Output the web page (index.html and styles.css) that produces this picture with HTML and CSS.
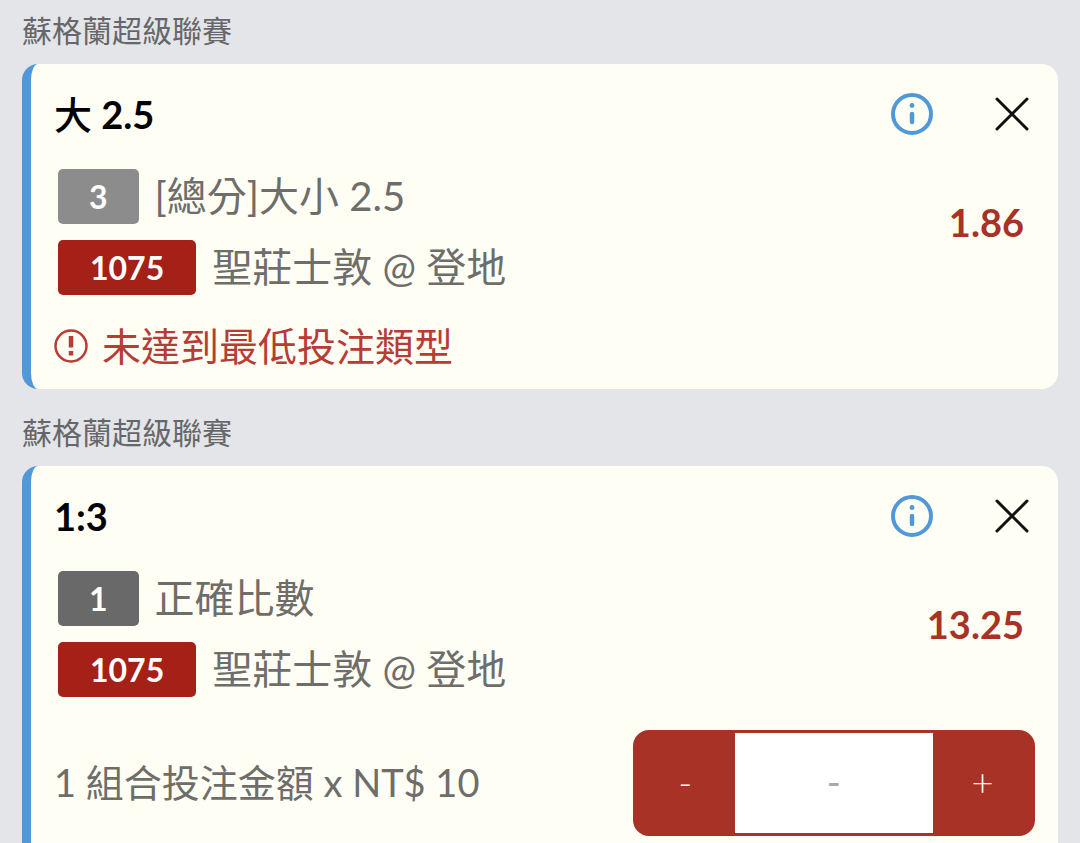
FILE: index.html
```html
<!DOCTYPE html>
<html lang="zh-Hant">
<head>
    <meta charset="UTF-8">
    <meta name="viewport" content="width=device-width, initial-scale=1.0">
    <title>投注單</title>
    <link rel="stylesheet" href="styles.css">
</head>
<body>
    <main class="slip">
        <h2 class="league">蘇格蘭超級聯賽</h2>
        <section class="bet">
            <div class="bet-header">
                <h3><span class="pick">大</span> 2.5</h3>
                <button class="icon-btn info" type="button" aria-label="資訊">
                    <svg width="42" height="42" viewBox="0 0 42 42" fill="none" stroke="currentColor" stroke-linecap="round">
                        <circle cx="21" cy="21" r="19" stroke-width="4"/>
                        <path d="M21 21v8" stroke-width="4.500"/>
                        <circle cx="21" cy="12.500" r="2.400" fill="currentColor" stroke="none"/>
                    </svg>
                </button>
                <button class="icon-btn close" type="button" aria-label="移除">
                    <svg width="34" height="34" viewBox="0 0 34 34" fill="none" stroke="currentColor" stroke-width="3" stroke-linecap="round">
                        <path d="M2 2l30 30M32 2L2 32"/>
                    </svg>
                </button>
            </div>
            <div class="bet-body">
                <div class="lines">
                    <p class="line"><span class="badge light">3</span>[總分]大小 2.5</p>
                    <p class="line"><span class="badge red">1075</span>聖莊士敦 @ 登地</p>
                </div>
                <strong class="odds">1.86</strong>
            </div>
            <p class="alert">
                <svg width="34" height="34" viewBox="0 0 34 34" fill="none" stroke="currentColor" aria-hidden="true">
                    <circle cx="17" cy="17" r="15.500" stroke-width="2.500"/>
                    <path d="M17 7v11.500M17 22v4.500" stroke-width="4.500"/>
                </svg>
                未達到最低投注類型
            </p>
        </section>

        <h2 class="league">蘇格蘭超級聯賽</h2>
        <section class="bet">
            <div class="bet-header">
                <h3>1:3</h3>
                <button class="icon-btn info" type="button" aria-label="資訊">
                    <svg width="42" height="42" viewBox="0 0 42 42" fill="none" stroke="currentColor" stroke-linecap="round">
                        <circle cx="21" cy="21" r="19" stroke-width="4"/>
                        <path d="M21 21v8" stroke-width="4.500"/>
                        <circle cx="21" cy="12.500" r="2.400" fill="currentColor" stroke="none"/>
                    </svg>
                </button>
                <button class="icon-btn close" type="button" aria-label="移除">
                    <svg width="34" height="34" viewBox="0 0 34 34" fill="none" stroke="currentColor" stroke-width="3" stroke-linecap="round">
                        <path d="M2 2l30 30M32 2L2 32"/>
                    </svg>
                </button>
            </div>
            <div class="bet-body">
                <div class="lines">
                    <p class="line"><span class="badge dark">1</span>正確比數</p>
                    <p class="line"><span class="badge red">1075</span>聖莊士敦 @ 登地</p>
                </div>
                <strong class="odds">13.25</strong>
            </div>
            <div class="stake">
                <label for="stake">1 組合投注金額 x NT$ 10</label>
                <div class="stepper">
                    <button type="button" aria-label="減少">-</button>
                    <input id="stake" type="text" inputmode="numeric" placeholder="-">
                    <button type="button" aria-label="增加">+</button>
                </div>
            </div>
        </section>
    </main>
</body>
</html>
```
FILE: styles.css
```css
* { box-sizing: border-box; }
body {
    margin: 0;
    height: 100vh;
    overflow: hidden;
    font-family: Lato, "Noto Sans CJK TC", sans-serif;
    font-size: 38px;
    color: #6e6d6a;
    background-color: #e4e5e8;
}
h2, h3, p { margin: 0; }
button, input { font: inherit; }
svg { display: block; flex: none; }
.slip { padding: 10px 22px; }
.league {
    margin-bottom: 14px;
    font-size: 30px;
    font-weight: 400;
    line-height: 40px;
    color: #66676a;
}
.bet {
    margin-bottom: 23px;
    padding: 22px 23px 18px;
    border-left: 9px solid #5198d9;
    border-radius: 16px;
    background-color: #fefef4;
}
.bet-header {
    display: flex;
    align-items: center;
    height: 56px;
}
.bet-header h3 {
    flex: 1;
    font-size: 38px;
    font-weight: 700;
    line-height: 56px;
    color: #000;
}
.pick { font-weight: 500; }
.icon-btn {
    padding: 0;
    border: 0;
    background: none;
    cursor: pointer;
}
.info { color: #5198d9; }
.close {
    margin: 0 6px 0 62px;
    color: #111;
}
.bet-body {
    display: flex;
    align-items: center;
    justify-content: space-between;
    margin-top: 27px;
    padding: 0 11px 0 4px;
}
.lines {
    display: flex;
    flex-direction: column;
    gap: 16px;
}
.line {
    display: flex;
    align-items: center;
    gap: 16px;
    height: 55px;
    font-size: 40px;
    line-height: 55px;
}
.badge {
    padding: 0 32px;
    border-radius: 5px;
    font-size: 32px;
    font-weight: 700;
    color: #fff;
}
.light, .dark { padding: 0 31px; }
.light { background-color: #8c8c8c; }
.dark { background-color: #696969; }
.red { background-color: #a52016; }
.odds {
    padding-bottom: 20px;
    color: #a83226;
}
.alert {
    display: flex;
    align-items: center;
    gap: 14px;
    margin-top: 26px;
    font-size: 39px;
    line-height: 50px;
    color: #b63c35;
}
.stake {
    display: flex;
    align-items: center;
    justify-content: space-between;
    margin-top: 33px;
    padding-bottom: 24px;
}
.stake label { padding-bottom: 6px; }
.stepper {
    display: grid;
    grid-template-columns: 1fr 2fr 1fr;
    width: 41%;
    height: 106px;
    border: 3px solid #a83226;
    border-radius: 16px;
    background-color: #a83226;
}
.stepper button {
    padding: 0 0 4px;
    border: 0;
    font-weight: 300;
    color: #fff;
    background: none;
    cursor: pointer;
}
.stepper input {
    width: 100%;
    min-width: 0;
    padding: 0 0 4px;
    border: 0;
    border-radius: 0;
    text-align: center;
    background-color: #fff;
}
.stepper input::placeholder { color: #aaa; }
```
